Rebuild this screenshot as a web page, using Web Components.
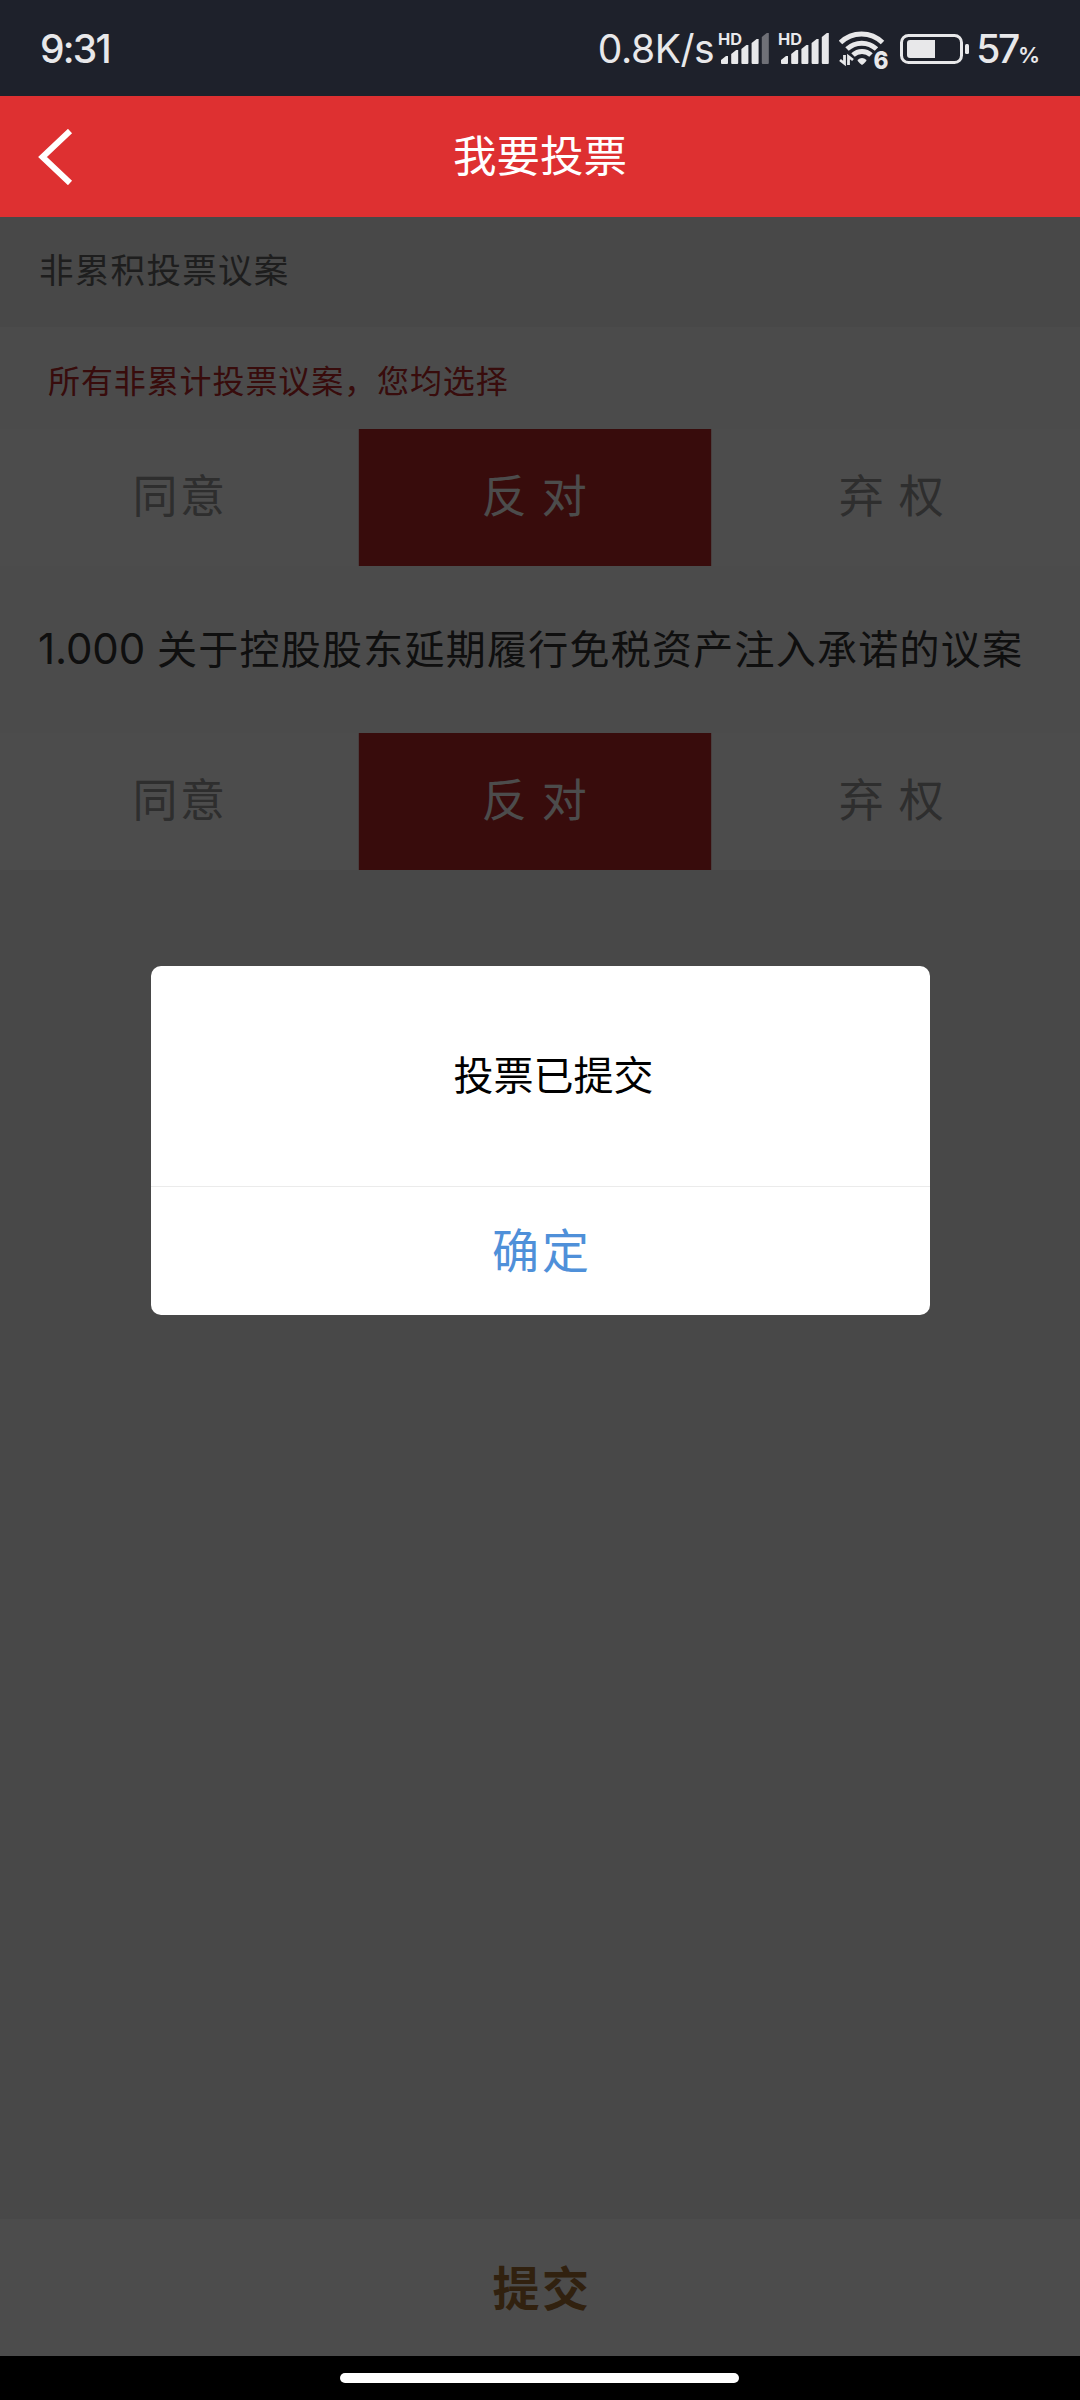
<!DOCTYPE html>
<html lang="zh-CN">
<head>
<meta charset="UTF-8">
<title>我要投票</title>
<style>
  body {
    margin: 0;
    width: 1080px;
    height: 2400px;
    overflow: hidden;
    display: flex;
    flex-direction: column;
    background: #000;
    font-family: "Noto Sans CJK SC", sans-serif;
  }
</style>
</head>
<body>
<status-bar time="9:31"></status-bar>
<nav-header>我要投票</nav-header>
<vote-page>
  <section-title>非累积投票议案</section-title>
  <vote-hint>所有非累计投票议案，您均选择</vote-hint>
  <vote-options selected="1"></vote-options>
  <proposal-title number="1.000">关于控股股东延期履行免税资产注入承诺的议案</proposal-title>
  <vote-options selected="1"></vote-options>
  <submit-bar slot="footer">提交</submit-bar>
  <alert-dialog slot="overlay" action="确定">投票已提交</alert-dialog>
</vote-page>
<home-indicator></home-indicator>

<script>
class BaseElement extends HTMLElement {
  constructor() {
    super();
    this.attachShadow({ mode: 'open' });
  }

  connectedCallback() {
    this.shadowRoot.innerHTML = this.template();
  }
}

class SignalIcon extends BaseElement {
  template() {
    const tops = [30, 24, 19, 13, 7];
    const level = Number(this.getAttribute('level'));
    const bars = tops.map((y, i) => {
      const x = 6 + i * 10.2;
      return `<path d="M${x} ${y + 4}L${x + 5} ${y}H${x + 7}V37Q${x + 7} 38 ${x + 6} 38H${x + 1}Q${x} 38 ${x} 37Z" opacity="${i < level ? 1 : 0.4}"/>`;
    }).join('');
    return `
      <style>
        :host { display: block; width: 56px; height: 46px; }
        svg { display: block; }
        text { font: 700 16px Inter, sans-serif; }
      </style>
      <svg width="56" height="46" fill="#e8e8ea">
        <text x="3" y="18.500" textLength="24" lengthAdjust="spacingAndGlyphs">HD</text>
        ${bars}
      </svg>
    `;
  }
}

class StatusBar extends BaseElement {
  template() {
    return `
      <style>
        :host {
          display: flex;
          align-items: center;
          box-sizing: border-box;
          height: 96px;
          padding: 2px 40px 0;
          background: #1e212b;
          color: #e8e8ea;
          font-family: Inter, sans-serif;
          font-size: 39px;
          line-height: 48px;
        }
        .time { flex: 1; font-weight: 500; letter-spacing: -1.8px; }
        .speed { letter-spacing: -0.4px; margin-right: 1px; }
        signal-icon + signal-icon { margin-left: 4px; }
        .wifi { margin-left: 8px; }
        .battery { margin-left: 7px; }
        svg { display: block; flex: none; }
        .level {
          display: flex;
          align-items: baseline;
          margin-left: 7px;
          font-weight: 500;
          letter-spacing: -2.4px;
        }
        .level small { font-size: 22px; line-height: 24px; font-weight: 600; letter-spacing: 0; }
        svg text { font: 800 25px Inter, sans-serif; }
      </style>
      <span class="time">${this.getAttribute('time')}</span>
      <span class="speed">0.8K/s</span>
      <signal-icon level="4"></signal-icon>
      <signal-icon level="5"></signal-icon>
      <svg class="wifi" width="54" height="56" viewBox="0 -8 54 56" fill="none" stroke="#e8e8ea" stroke-width="5">
        <path d="M1.500 13.500a30 30 0 0 1 42 0"/>
        <path d="M8 20a21.500 21.500 0 0 1 29.500 0"/>
        <path d="M14 26a13 13 0 0 1 18 0"/>
        <path d="M18.500 31q4.500-4 9 0q0 1.500-4.500 5q-4.500-3.500-4.500-5z" fill="#e8e8ea" stroke="none"/>
        <path d="M1 31l4.500 3.500V26M9.500 36v-8.500l4.500 3.500" stroke-width="2.800"/>
        <text x="34.500" y="39.500" fill="#e8e8ea" stroke="#1e212b" stroke-width="3" paint-order="stroke" textLength="15" lengthAdjust="spacingAndGlyphs">6</text>
      </svg>
      <svg class="battery" width="69" height="30">
        <rect x="1.500" y="1.500" width="60" height="27" rx="7" fill="none" stroke="#e8e8ea" stroke-width="3"/>
        <path d="M35 6V24H10Q7 24 7 21V9Q7 6 10 6Z" fill="#e8e8ea"/>
        <rect x="65" y="10" width="4" height="10" rx="1.500" fill="#e8e8ea"/>
      </svg>
      <span class="level">57<small>%</small></span>
    `;
  }
}

class NavHeader extends BaseElement {
  template() {
    return `
      <style>
        :host {
          display: grid;
          grid-template-columns: 120px 1fr 120px;
          align-items: center;
          height: 121px;
          background: #de3031;
          color: #fff;
          font-size: 43.5px;
          line-height: 60px;
          text-align: center;
        }
        svg { display: block; margin-left: 38px; }
        span { padding-bottom: 5px; }
      </style>
      <svg width="36" height="56" fill="none" stroke="#fff" stroke-width="6">
        <path d="M32 2L4.500 28L32 54"/>
      </svg>
      <span><slot></slot></span>
    `;
  }
}

class VotePage extends BaseElement {
  template() {
    return `
      <style>
        :host {
          position: relative;
          display: flex;
          flex-direction: column;
          height: 2139px;
          background: #f0f0f0;
        }
        main { flex: 1; }
      </style>
      <main><slot></slot></main>
      <slot name="footer"></slot>
      <slot name="overlay"></slot>
    `;
  }
}

class SectionTitle extends BaseElement {
  template() {
    return `
      <style>
        :host {
          display: block;
          box-sizing: border-box;
          height: 110px;
          padding: 25px 39px 0;
          color: #666;
          font-size: 34.5px;
          line-height: 52px;
          letter-spacing: 1.3px;
        }
      </style>
      <slot></slot>
    `;
  }
}

class VoteHint extends BaseElement {
  template() {
    return `
      <style>
        :host {
          display: block;
          box-sizing: border-box;
          height: 102px;
          padding: 28px 48px 0;
          background: #fafafa;
          color: #bb2828;
          font-size: 32px;
          line-height: 48px;
          letter-spacing: 0.9px;
        }
      </style>
      <slot></slot>
    `;
  }
}

class VoteOptions extends BaseElement {
  template() {
    const selected = Number(this.getAttribute('selected'));
    const options = ['同意', '反 对', '弃 权'].map((label, i) =>
      `<div class="option${i === selected ? ' selected' : ''}">${label}</div>`
    ).join('');
    return `
      <style>
        :host {
          display: grid;
          grid-template-columns: 359px 352px 1fr;
          height: 137px;
          background: #fff;
          color: #999;
          font-size: 45px;
          letter-spacing: 2.5px;
        }
        .option {
          display: flex;
          align-items: center;
          justify-content: center;
          padding: 0 0 7px 1px;
          line-height: 60px;
        }
        .option:last-child { padding-right: 7px; }
        .selected {
          background: #bb2828;
          color: #fff;
          box-shadow: -1px 0 rgba(187, 40, 40, 0.2), 1px 0 rgba(187, 40, 40, 0.2);
        }
      </style>
      ${options}
    `;
  }
}

class ProposalTitle extends BaseElement {
  template() {
    return `
      <style>
        :host {
          display: flex;
          align-items: baseline;
          box-sizing: border-box;
          height: 167px;
          padding: 51px 38px 0;
          background: #fafafa;
          color: #333;
          font-size: 40px;
          line-height: 60px;
          letter-spacing: 1.25px;
          white-space: nowrap;
        }
        .number {
          width: 119px;
          font-family: Inter, sans-serif;
          font-size: 42px;
          letter-spacing: -0.1px;
        }
      </style>
      <span class="number">${this.getAttribute('number')}</span>
      <span><slot></slot></span>
    `;
  }
}

class SubmitBar extends BaseElement {
  template() {
    return `
      <style>
        :host {
          display: flex;
          align-items: center;
          justify-content: center;
          box-sizing: border-box;
          height: 137px;
          padding: 0 0 4px 4px;
          background: #fff;
          color: #a36e32;
          font-size: 47px;
          font-weight: 700;
          line-height: 60px;
          letter-spacing: 2.5px;
        }
      </style>
      <span><slot></slot></span>
    `;
  }
}

class AlertDialog extends BaseElement {
  template() {
    return `
      <style>
        :host {
          position: absolute;
          inset: 0;
          display: flex;
          flex-direction: column;
          align-items: center;
          box-sizing: border-box;
          padding: 749px 0 0 1px;
          background: rgba(0, 0, 0, 0.7);
        }
        .dialog {
          width: 779px;
          height: 349px;
          display: flex;
          flex-direction: column;
          border-radius: 10px;
          background: #fff;
          text-align: center;
        }
        .message {
          box-sizing: border-box;
          height: 221px;
          padding: 77px 0 0 26px;
          border-bottom: 1px solid #ebebeb;
          color: #000;
          font-size: 40px;
          line-height: 60px;
        }
        .action {
          padding: 31px 0 0 3px;
          color: #4f90d9;
          font-size: 47px;
          line-height: 60px;
          letter-spacing: 3px;
        }
      </style>
      <div class="dialog">
        <div class="message"><slot></slot></div>
        <div class="action">${this.getAttribute('action')}</div>
      </div>
    `;
  }
}

class HomeIndicator extends BaseElement {
  template() {
    return `
      <style>
        :host {
          display: flex;
          align-items: center;
          justify-content: center;
          height: 44px;
          padding-right: 2px;
          background: #000;
        }
        .pill { width: 399px; height: 10px; border-radius: 5px; background: #fff; }
      </style>
      <div class="pill"></div>
    `;
  }
}

customElements.define('signal-icon', SignalIcon);
customElements.define('status-bar', StatusBar);
customElements.define('nav-header', NavHeader);
customElements.define('vote-page', VotePage);
customElements.define('section-title', SectionTitle);
customElements.define('vote-hint', VoteHint);
customElements.define('vote-options', VoteOptions);
customElements.define('proposal-title', ProposalTitle);
customElements.define('submit-bar', SubmitBar);
customElements.define('alert-dialog', AlertDialog);
customElements.define('home-indicator', HomeIndicator);
</script>
</body>
</html>
